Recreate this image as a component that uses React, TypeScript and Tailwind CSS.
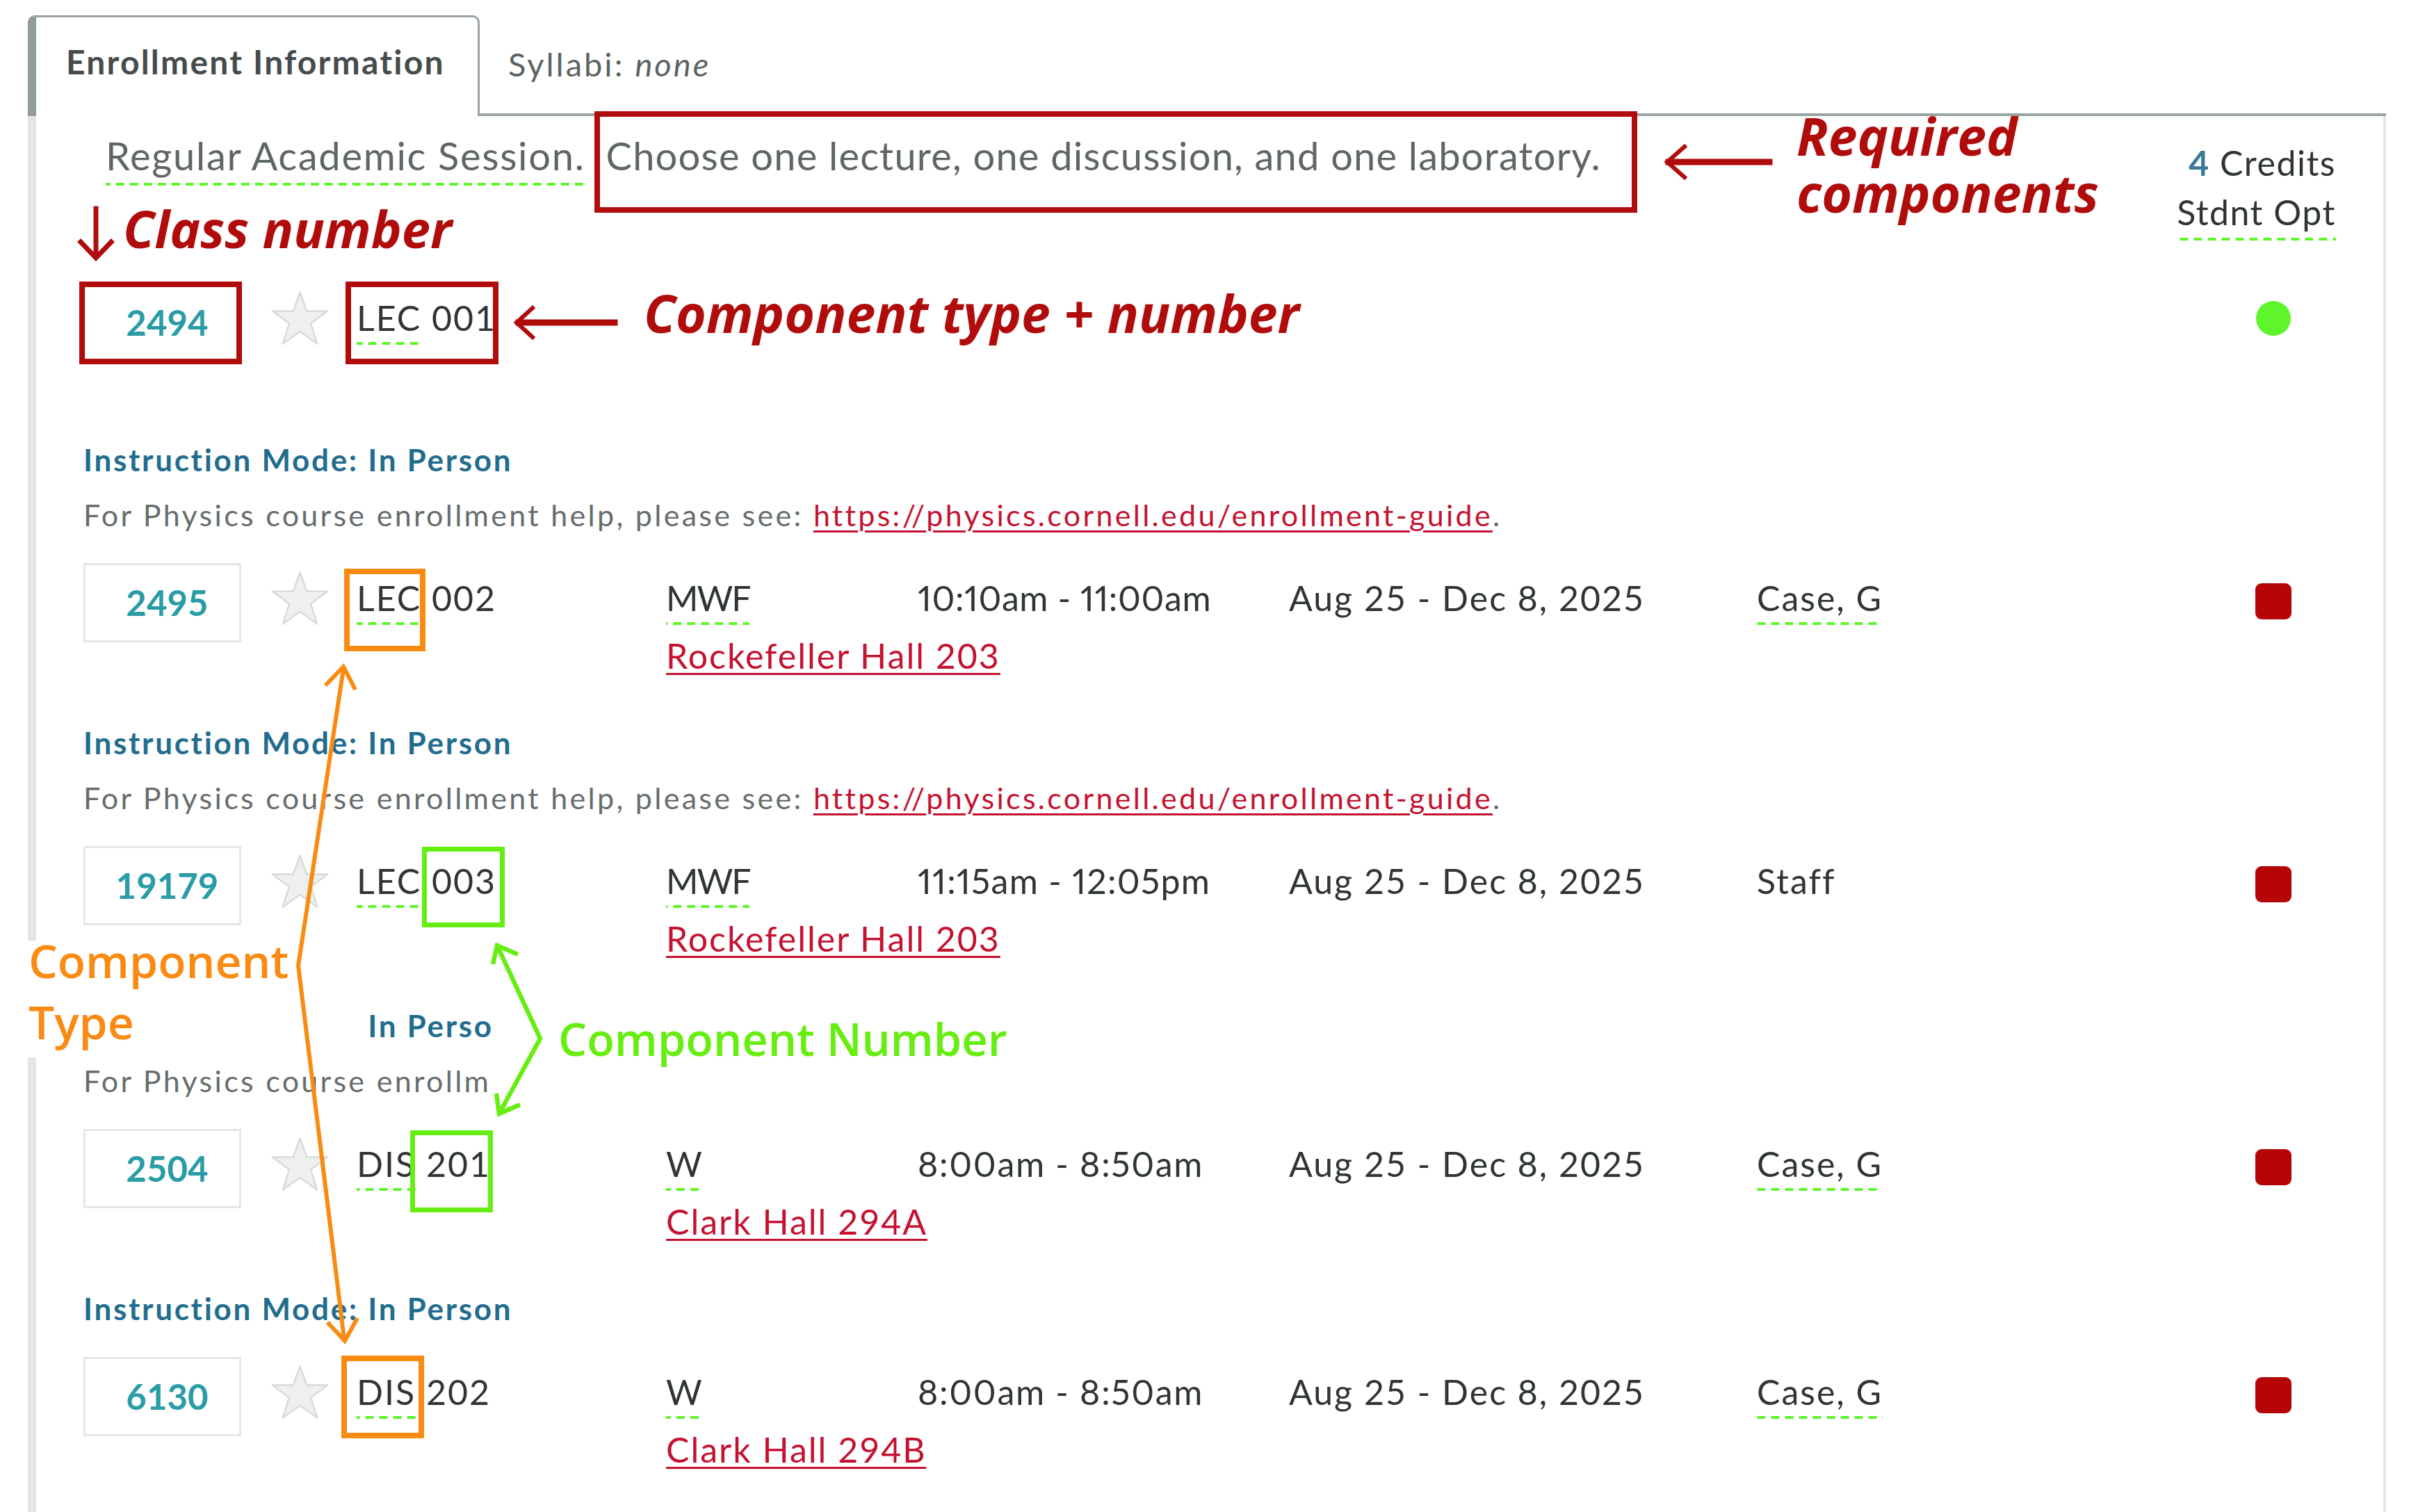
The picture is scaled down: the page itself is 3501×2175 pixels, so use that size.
import React from "react";

const DASH =
  "inline-block bg-[linear-gradient(to_right,#5ef52a_62%,transparent_62%)] bg-[length:20px_4px] bg-bottom bg-repeat-x";
const LINK = "text-[#c41230] underline decoration-[3px] underline-offset-[6px]";

function Star() {
  return (
    <svg width="85" height="80" viewBox="0 0 100 95" className="ml-[42px] mb-[12px] shrink-0">
      <polygon
        points="50,3 61.5,35 97,35 68.5,56.5 79.5,91 50,70 20.5,91 31.5,56.5 3,35 38.5,35"
        fill="#eef0f0"
        stroke="#d7dbdb"
        strokeWidth="3"
        strokeLinejoin="round"
      />
    </svg>
  );
}

type RowP = {
  num: string;
  type: string;
  cnum: string;
  day?: string;
  time?: string;
  timeCls?: string;
  date?: string;
  instr?: string;
  instrDashed?: boolean;
  loc?: string;
  open?: boolean;
};

function Row(p: RowP) {
  return (
    <div className="flex items-start h-[159px] text-[50px] leading-[50px] tracking-[2px] text-[#2f3535]">
      <div className="flex items-center h-[114px] shrink-0">
        <div className="w-[227px] h-[114px] border-[3px] border-[#e3e7e7] flex items-center justify-center pl-[14px] text-[51px] font-bold tracking-[0px] text-[#2a9ca6]">
          {p.num}
        </div>
        <Star />
        <div className="ml-[39px] w-[445px] mb-[14px] whitespace-nowrap">
          <span className={`${DASH} pb-[14px] -mb-[14px]`}>{p.type}</span> {p.cnum}
        </div>
      </div>
      <div className="w-[362px] shrink-0 pt-[25px] flex flex-col items-start whitespace-nowrap">
        {p.day && <span className={`${DASH} pb-[14px] -mb-[14px] tracking-[-2px]`}>{p.day}</span>}
        {p.loc && <span className={`mt-[33px] ${LINK}`}>{p.loc}</span>}
      </div>
      <div className="w-[534px] shrink-0 pt-[25px] whitespace-nowrap">
        {p.time && <span className={`proportional-nums ${p.timeCls ?? ""}`}>{p.time}</span>}
      </div>
      <div className="w-[673px] shrink-0 pt-[25px] whitespace-nowrap">{p.date && <span>{p.date}</span>}</div>
      <div className="w-[717px] shrink-0 pt-[25px] whitespace-nowrap">
        {p.instr &&
          (p.instrDashed ? (
            <span className={`${DASH} pb-[14px] -mb-[14px]`}>{p.instr}</span>
          ) : (
            <span>{p.instr}</span>
          ))}
      </div>
      {p.open ? (
        <div className="w-[50px] h-[50px] mt-[26px] ml-[1px] rounded-full bg-[#5ef52a] shrink-0" />
      ) : (
        <div className="w-[52px] h-[52px] mt-[29px] rounded-[9px] bg-[#b50505] shrink-0" />
      )}
    </div>
  );
}

type Sec = RowP & { help: boolean };

const sections: Sec[] = [
  {
    num: "2495",
    type: "LEC",
    cnum: "002",
    day: "MWF",
    time: "10:10am - 11:00am",
    timeCls: "tracking-[0.6px]",
    date: "Aug 25 - Dec 8, 2025",
    instr: "Case, G",
    instrDashed: true,
    loc: "Rockefeller Hall 203",
    help: true,
  },
  {
    num: "19179",
    type: "LEC",
    cnum: "003",
    day: "MWF",
    time: "11:15am - 12:05pm",
    timeCls: "tracking-[1.3px]",
    date: "Aug 25 - Dec 8, 2025",
    instr: "Staff",
    instrDashed: false,
    loc: "Rockefeller Hall 203",
    help: true,
  },
  {
    num: "2504",
    type: "DIS",
    cnum: "201",
    day: "W",
    time: "8:00am - 8:50am",
    timeCls: "tracking-[1.7px]",
    date: "Aug 25 - Dec 8, 2025",
    instr: "Case, G",
    instrDashed: true,
    loc: "Clark Hall 294A",
    help: true,
  },
  {
    num: "6130",
    type: "DIS",
    cnum: "202",
    day: "W",
    time: "8:00am - 8:50am",
    timeCls: "tracking-[1.7px]",
    date: "Aug 25 - Dec 8, 2025",
    instr: "Case, G",
    instrDashed: true,
    loc: "Clark Hall 294B",
    help: false,
  },
];

function Section({ s, first }: { s: Sec; first: boolean }) {
  return (
    <div className={first ? "mt-[73px]" : "mt-[77px]"}>
      <div className="text-[44px] leading-[44px] font-bold tracking-[2.7px] text-[#226c8e] whitespace-nowrap w-fit">
        Instruction Mode: In Person
      </div>
      {s.help && (
        <div className="mt-[36px] text-[43px] leading-[43px] tracking-[3.3px] text-[#666d6d] whitespace-nowrap">
          For Physics course enrollment help, please see:{" "}
          <span className={LINK}>https://physics.cornell.edu/enrollment-guide</span>.
        </div>
      )}
      <div className="mt-[48px]">
        <Row {...s} />
      </div>
    </div>
  );
}

export default function App() {
  return (
    <div className="relative w-[3501px] h-[2175px] overflow-hidden bg-white font-[Lato,sans-serif]">
      <div className="flex flex-col h-full pl-[40px] pt-[22px] pr-[69px]">
        {/* tabs */}
        <div className="flex h-[145px] shrink-0">
          <div className="w-[650px] h-full border-l-[12px] border-t-[3px] border-r-[3px] border-l-[#919c9b] border-t-[#98a3a2] border-r-[#98a3a2] rounded-tl-[10px] rounded-tr-[10px] pl-[43px] pt-[40px] bg-white">
            <span className="text-[48px] leading-[48px] font-bold tracking-[2.2px] text-[#454c4c] whitespace-nowrap">
              Enrollment Information
            </span>
          </div>
          <div className="flex-1 border-b-[4px] border-[#98a3a2] pl-[41px] pt-[47px]">
            <span className="text-[47px] leading-[47px] tracking-[3px] text-[#5b6363] whitespace-nowrap">
              Syllabi: <i>none</i>
            </span>
          </div>
        </div>
        {/* panel */}
        <div className="flex-1 border-l-[12px] border-r-[4px] border-l-[#e1e6e5] border-r-[#e2e6e5] pl-[68px] pt-[29px]">
          <div className="h-[211px] flex items-start">
            <div className="ml-[32px] text-[56px] leading-[56px] text-[#5f6666] whitespace-nowrap">
              <span className={`${DASH} pb-[15px] -mb-[15px] tracking-[1.7px]`}>Regular Academic Session.</span>
              <span className="ml-[30px] tracking-[1.2px]">
                Choose one lecture, one discussion, and one laboratory.
              </span>
            </div>
            <div className="ml-auto mr-[68px] mt-[3px] text-right text-[50px] leading-[71px] tracking-[1.5px] text-[#2f3535] whitespace-nowrap">
              <div>
                <span className="font-bold text-[#3b7b9a]">4</span> Credits
              </div>
              <div>
                <span className={`${DASH} pb-[5px] -mb-[5px]`}>Stdnt Opt</span>
              </div>
            </div>
          </div>
          <Row num="2494" type="LEC" cnum="001" open />
          {sections.map((s, i) => (
            <Section key={s.num} s={s} first={i === 0} />
          ))}
        </div>
      </div>

      {/* ===== annotations ===== */}
      <div className="absolute left-[30px] top-[1353px] w-[500px] h-[168px] bg-white" />
      <div className="absolute left-[707px] top-[1440px] w-[1560px] h-[160px] bg-white" />

      <div className="absolute left-[855px] top-[160px] w-[1500px] h-[146px] border-[8px] border-[#b10c0c]" />
      <div className="absolute left-[114px] top-[405px] w-[234px] h-[119px] border-[8px] border-[#b10c0c]" />
      <div className="absolute left-[497px] top-[405px] w-[220px] h-[119px] border-[8px] border-[#b10c0c]" />
      <div className="absolute left-[495px] top-[818px] w-[117px] h-[119px] border-[8px] border-[#f98a12]" />
      <div className="absolute left-[491px] top-[1950px] w-[119px] h-[119px] border-[8px] border-[#f98a12]" />
      <div className="absolute left-[607px] top-[1218px] w-[119px] h-[116px] border-[7px] border-[#66ee10]" />
      <div className="absolute left-[590px] top-[1626px] w-[119px] h-[118px] border-[7px] border-[#66ee10]" />

      <svg className="absolute left-0 top-0 pointer-events-none" width="3501" height="2175" viewBox="0 0 3501 2175">
        <g fill="none" stroke="#b10c0c" strokeLinecap="square" strokeLinejoin="miter">
          <line x1="138" y1="300" x2="138" y2="368" strokeWidth="7" />
          <polyline points="116,348 138,371 160,348" strokeWidth="7" />
          <line x1="746" y1="464" x2="884" y2="464" strokeWidth="9" />
          <polyline points="766,443 743,464 766,485" strokeWidth="6" />
          <line x1="2400" y1="233" x2="2545" y2="233" strokeWidth="9" />
          <polyline points="2423,211 2398,233 2423,255" strokeWidth="6" />
        </g>
        <g fill="none" stroke="#f98a12" strokeWidth="6" strokeLinejoin="miter">
          <polyline points="494,962 429,1389 495,1926" />
          <polyline points="468,986 494,959 511,992" />
          <polyline points="471,1902 496,1929 514,1896" />
        </g>
        <g fill="none" stroke="#66ee10" strokeWidth="6.5" strokeLinejoin="miter">
          <polyline points="716,1362 777,1494 719,1600" />
          <polyline points="709,1387 715,1360 745,1373" />
          <polyline points="714,1573 718,1602 748,1589" />
        </g>
      </svg>

      <div className="absolute left-[177px] top-[292px] text-[74px] leading-[74px] font-bold italic text-[#b10c0c] font-['Open_Sans',sans-serif] whitespace-nowrap">
        Class number
      </div>
      <div className="absolute left-[926px] top-[413px] text-[75px] leading-[75px] font-bold italic text-[#b10c0c] font-['Open_Sans',sans-serif] whitespace-nowrap">
        Component type + number
      </div>
      <div className="absolute left-[2584px] top-[154px] text-[75px] leading-[82px] font-bold italic text-[#b10c0c] font-['Open_Sans',sans-serif] whitespace-nowrap">
        <div>Required</div>
        <div>components</div>
      </div>
      <div className="absolute left-[41px] top-[1337px] text-[66px] leading-[88px] font-semibold text-[#f98a12] font-['Open_Sans',sans-serif] whitespace-nowrap">
        <div>Component</div>
        <div>Type</div>
      </div>
      <div className="absolute left-[803px] top-[1462px] text-[65px] leading-[65px] font-semibold text-[#66ee10] font-['Open_Sans',sans-serif] whitespace-nowrap">
        Component Number
      </div>
    </div>
  );
}
